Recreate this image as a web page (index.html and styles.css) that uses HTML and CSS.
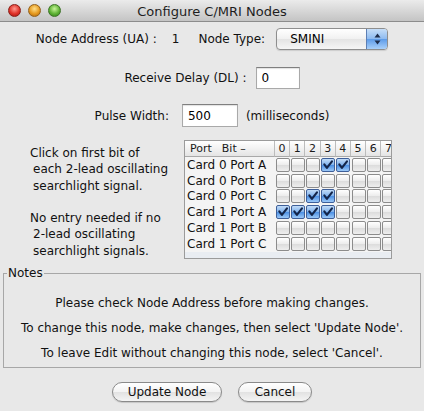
FILE: index.html
```html
<!DOCTYPE html>
<html>
<head>
<meta charset="utf-8">
<title>Configure C/MRI Nodes</title>
<link rel="stylesheet" href="styles.css">
</head>
<body>
<div class="window">
  <div class="titlebar">
    <div class="lights">
      <span class="light red"></span>
      <span class="light amber"></span>
      <span class="light green"></span>
    </div>
    <div class="title">Configure C/MRI Nodes</div>
    <div></div>
  </div>
  <div class="content">
    <div class="row r1">
      <span class="lbl">Node Address (UA) :</span>
      <span class="val">1</span>
      <span class="lbl type">Node Type:</span>
      <div class="select">
        <span class="sel-text">SMINI</span>
        <span class="sel-arrows">
          <svg width="9" height="14" viewBox="0 0 9 14"><path d="M4.5 1.5 L7.5 5.5 L1.5 5.5 Z" fill="#1d2c4a"/><path d="M4.5 12.5 L7.5 8.5 L1.5 8.5 Z" fill="#1d2c4a"/></svg>
        </span>
      </div>
    </div>
    <div class="row r2">
      <span class="lbl">Receive Delay (DL) :</span>
      <div class="field f-delay">0</div>
    </div>
    <div class="row r3">
      <span class="lbl">Pulse Width:</span>
      <div class="field f-pulse">500</div>
      <span class="lbl">(milliseconds)</span>
    </div>
    <div class="mid">
      <div class="hint">
        <div>Click on first bit of</div>
        <div class="ind">each 2-lead oscillating</div>
        <div class="ind">searchlight signal.</div>
        <div>&nbsp;</div>
        <div>No entry needed if no</div>
        <div class="ind">2-lead oscillating</div>
        <div class="ind">searchlight signals.</div>
      </div>
      <div class="scroll">
        <div class="grid">
          <div class="th first"><span>Port</span><span>Bit –</span></div>
          <div class="th">0</div><div class="th">1</div><div class="th">2</div><div class="th">3</div>
          <div class="th">4</div><div class="th">5</div><div class="th">6</div><div class="th">7</div>

          <div class="td name">Card 0 Port A</div>
          <div class="td"><span class="cb"></span></div>
          <div class="td"><span class="cb"></span></div>
          <div class="td"><span class="cb"></span></div>
          <div class="td"><span class="cb on"><svg viewBox="0 0 13 13"><path d="M2.5 5.8 L5.3 9.6 L10.8 2.6" /></svg></span></div>
          <div class="td"><span class="cb on"><svg viewBox="0 0 13 13"><path d="M2.5 5.8 L5.3 9.6 L10.8 2.6" /></svg></span></div>
          <div class="td"><span class="cb"></span></div>
          <div class="td"><span class="cb"></span></div>
          <div class="td"><span class="cb"></span></div>

          <div class="td name">Card 0 Port B</div>
          <div class="td"><span class="cb"></span></div>
          <div class="td"><span class="cb"></span></div>
          <div class="td"><span class="cb"></span></div>
          <div class="td"><span class="cb"></span></div>
          <div class="td"><span class="cb"></span></div>
          <div class="td"><span class="cb"></span></div>
          <div class="td"><span class="cb"></span></div>
          <div class="td"><span class="cb"></span></div>

          <div class="td name">Card 0 Port C</div>
          <div class="td"><span class="cb"></span></div>
          <div class="td"><span class="cb"></span></div>
          <div class="td"><span class="cb on"><svg viewBox="0 0 13 13"><path d="M2.5 5.8 L5.3 9.6 L10.8 2.6" /></svg></span></div>
          <div class="td"><span class="cb on"><svg viewBox="0 0 13 13"><path d="M2.5 5.8 L5.3 9.6 L10.8 2.6" /></svg></span></div>
          <div class="td"><span class="cb"></span></div>
          <div class="td"><span class="cb"></span></div>
          <div class="td"><span class="cb"></span></div>
          <div class="td"><span class="cb"></span></div>

          <div class="td name">Card 1 Port A</div>
          <div class="td"><span class="cb on"><svg viewBox="0 0 13 13"><path d="M2.5 5.8 L5.3 9.6 L10.8 2.6" /></svg></span></div>
          <div class="td"><span class="cb on"><svg viewBox="0 0 13 13"><path d="M2.5 5.8 L5.3 9.6 L10.8 2.6" /></svg></span></div>
          <div class="td"><span class="cb on"><svg viewBox="0 0 13 13"><path d="M2.5 5.8 L5.3 9.6 L10.8 2.6" /></svg></span></div>
          <div class="td"><span class="cb on"><svg viewBox="0 0 13 13"><path d="M2.5 5.8 L5.3 9.6 L10.8 2.6" /></svg></span></div>
          <div class="td"><span class="cb"></span></div>
          <div class="td"><span class="cb"></span></div>
          <div class="td"><span class="cb"></span></div>
          <div class="td"><span class="cb"></span></div>

          <div class="td name">Card 1 Port B</div>
          <div class="td"><span class="cb"></span></div>
          <div class="td"><span class="cb"></span></div>
          <div class="td"><span class="cb"></span></div>
          <div class="td"><span class="cb"></span></div>
          <div class="td"><span class="cb"></span></div>
          <div class="td"><span class="cb"></span></div>
          <div class="td"><span class="cb"></span></div>
          <div class="td"><span class="cb"></span></div>

          <div class="td name">Card 1 Port C</div>
          <div class="td"><span class="cb"></span></div>
          <div class="td"><span class="cb"></span></div>
          <div class="td"><span class="cb"></span></div>
          <div class="td"><span class="cb"></span></div>
          <div class="td"><span class="cb"></span></div>
          <div class="td"><span class="cb"></span></div>
          <div class="td"><span class="cb"></span></div>
          <div class="td"><span class="cb"></span></div>
        </div>
      </div>
    </div>
    <fieldset class="notes">
      <legend>Notes</legend>
      <p>Please check Node Address before making changes.</p>
      <p>To change this node, make changes, then select 'Update Node'.</p>
      <p>To leave Edit without changing this node, select 'Cancel'.</p>
    </fieldset>
    <div class="buttons">
      <button class="btn b-update">Update Node</button>
      <button class="btn b-cancel">Cancel</button>
    </div>
  </div>
</div>
</body>
</html>
```
FILE: styles.css
```css
html, body {
  margin: 0;
  padding: 0;
}
body {
  background: #e8e8e8;
  font-family: "DejaVu Sans", "Liberation Sans", sans-serif;
  font-size: 12px;
  color: #111;
}
.window {
  width: 424px;
  height: 411px;
  overflow: hidden;
}
.titlebar {
  height: 21px;
  border-bottom: 1px solid #8c8c8c;
  background: linear-gradient(#ebebeb, #c4c4c4);
  display: grid;
  grid-template-columns: 1fr auto 1fr;
  align-items: center;
}
.lights {
  display: flex;
  gap: 7px;
  padding-left: 8px;
}
.light {
  width: 13px;
  height: 13px;
  border-radius: 50%;
  box-sizing: border-box;
}
.red {
  background: radial-gradient(circle at 50% 35%, #ff9a8f 0, #e0332a 55%, #a3140f 100%);
  border: 1px solid #8a1e18;
}
.amber {
  background: radial-gradient(circle at 50% 35%, #ffe08a 0, #e69a1f 55%, #a86210 100%);
  border: 1px solid #93601a;
}
.green {
  background: radial-gradient(circle at 50% 35%, #c8f59a 0, #5fb335 55%, #2f7a17 100%);
  border: 1px solid #3b7325;
}
.title {
  font-size: 13px;
  color: #1e1e1e;
  padding-top: 1px;
}

.content {
  padding-top: 6px;
}
.row {
  display: flex;
  justify-content: center;
  align-items: center;
}
.r1 {
  height: 22px;
}
.r1 .val {
  margin-left: 15px;
}
.r1 .type {
  margin-left: 19px;
}
.select {
  margin-left: 11px;
  width: 112px;
  height: 22px;
  box-sizing: border-box;
  border: 1px solid #8e8e8e;
  border-radius: 4px;
  background: linear-gradient(#ffffff, #f1f1f1 50%, #e4e4e4 51%, #f6f6f6);
  display: flex;
  align-items: center;
  overflow: hidden;
  box-shadow: 0 1px 1px rgba(0,0,0,0.12);
}
.sel-text {
  flex: 1;
  padding-left: 13px;
  font-size: 12px;
  color: #000;
}
.sel-arrows {
  width: 20px;
  height: 100%;
  border-left: 1px solid #5d7fb4;
  background: linear-gradient(#c6def8, #8dbaf0 50%, #5d9be8 51%, #a9d0fa);
  display: flex;
  align-items: center;
  justify-content: center;
}
.r2 {
  margin-top: 17px;
  height: 22px;
}
.r3 {
  margin-top: 15px;
  height: 23px;
}
.field {
  box-sizing: border-box;
  background: #fff;
  border: 1px solid #a9a9a9;
  border-top-color: #7f7f7f;
  box-shadow: inset 0 1px 1px rgba(0,0,0,0.12);
  display: flex;
  align-items: center;
  padding-left: 5px;
  color: #000;
}
.f-delay {
  margin-left: 9px;
  width: 44px;
  height: 22px;
}
.f-pulse {
  margin-left: 13px;
  margin-right: 8px;
  width: 56px;
  height: 23px;
}

.mid {
  margin-top: 13px;
  display: flex;
  align-items: flex-start;
  padding-left: 30px;
  gap: 7px;
}
.hint {
  width: 147px;
  padding-top: 5px;
  line-height: 16.3px;
  white-space: nowrap;
}
.hint .ind {
  padding-left: 3px;
}
.scroll {
  width: 206px;
  height: 117px;
  border: 1px solid #9b9b9b;
  background: #e9edf2;
  overflow: hidden;
}
.grid {
  display: grid;
  grid-template-columns: 90px repeat(8, 15.2px);
  grid-auto-rows: 15.8px;
  grid-template-rows: 16px;
  width: 212px;
  background: #f4f4f4;
}
.th {
  box-sizing: border-box;
  background: linear-gradient(#ffffff, #f2f2f2 50%, #e4e4e4);
  border-bottom: 1px solid #a9a9a9;
  border-right: 1px solid #bcbcbc;
  font-size: 11px;
  line-height: 15px;
  text-align: center;
  color: #1a1a1a;
}
.th.first {
  text-align: left;
  padding-left: 5px;
  display: flex;
  gap: 10px;
}
.td {
  display: flex;
  align-items: center;
  justify-content: center;
}
.td.name {
  justify-content: flex-start;
  padding-left: 2px;
  white-space: nowrap;
  color: #111;
}
.cb {
  width: 14px;
  height: 14px;
  box-sizing: border-box;
  border: 1px solid #8c8c8c;
  border-radius: 2px;
  background: linear-gradient(#ffffff, #ececec 50%, #dcdcdc 51%, #eeeeee);
  display: block;
}
.cb.on {
  border-color: #3e5f99;
  background: linear-gradient(#c2dcf8, #7fb1ec 50%, #4a8fe4 51%, #9cc8f7);
}
.cb svg {
  width: 12px;
  height: 12px;
  display: block;
}
.cb svg path {
  fill: none;
  stroke: #14254a;
  stroke-width: 2.3;
  stroke-linecap: round;
  stroke-linejoin: round;
}

.notes {
  margin: 7px 3px 0;
  padding: 11px 0 1px;
  border: 1px solid #a7a7a7;
  min-width: 0;
}
.notes legend {
  margin-left: 3px;
  padding: 0 1px;
  line-height: 14px;
  color: #111;
}
.notes p {
  margin: 0;
  line-height: 25px;
  text-align: center;
}

.buttons {
  margin-top: 14px;
  display: flex;
  justify-content: center;
  gap: 16px;
}
.btn {
  height: 20px;
  border: 1px solid #8a8a8a;
  border-radius: 10px;
  background: linear-gradient(#ffffff, #f3f3f3 50%, #e2e2e2 51%, #f4f4f4);
  font-family: "DejaVu Sans", "Liberation Sans", sans-serif;
  font-size: 12px;
  color: #111;
  padding: 0;
  box-shadow: 0 1px 1px rgba(0,0,0,0.15);
}
.b-update {
  width: 110px;
}
.b-cancel {
  width: 74px;
}
```
